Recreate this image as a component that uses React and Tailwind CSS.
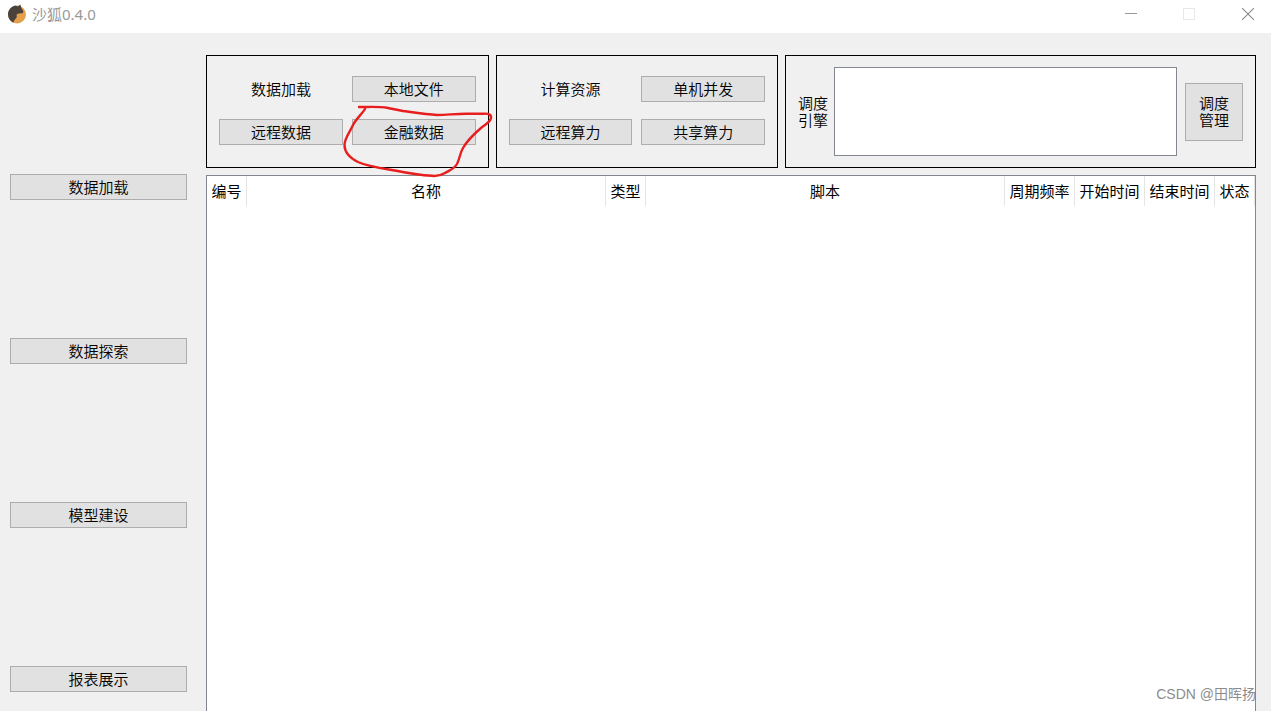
import React from "react";

const STAGES = ["数据加载", "数据探索", "模型建设", "报表展示"];

const COLUMNS = [
  { name: "编号", width: "w-10" },
  { name: "名称", width: "" },
  { name: "类型", width: "w-10" },
  { name: "脚本", width: "" },
  { name: "周期频率", width: "w-[70px]" },
  { name: "开始时间", width: "w-[70px]" },
  { name: "结束时间", width: "w-[70px]" },
  { name: "状态", width: "w-10" },
];

function PushButton({ children, className = "h-[26px]" }) {
  return (
    <button
      type="button"
      className={`border border-[#adadad] bg-[#e1e1e1] text-center font-[350] leading-[17px] hover:border-[#0078d7] hover:bg-[#e5f1fb] ${className}`}
    >
      {children}
    </button>
  );
}

function FoxLogo() {
  return (
    <svg className="size-5" viewBox="0 0 20 20" aria-hidden="true">
      <circle cx="10" cy="10.5" r="9" fill="#e5a04b" />
      <path
        d="M13.2 0.600 L14.300 3.600 C14.800 5.200 16.200 6.400 16.400 8 L15.400 9.200 L11.600 9.400 C9.800 9.800 9.200 10.800 9.800 12.200 C10.200 14 7.400 14.600 6.400 18.800 C3 17.200 1 14 1 10.500 C1 6 4.400 2.200 8.600 1.500 L10.800 2.400 Z"
        fill="#4a433b"
      />
    </svg>
  );
}

function TitleBar() {
  return (
    <header className="flex h-[33px] items-start justify-between bg-white text-[#999999]">
      <div className="flex h-7 items-center gap-[5px] pl-[7px]">
        <FoxLogo />
        <h1 className="text-[15px] leading-5">沙狐0.4.0</h1>
      </div>
      <div className="flex h-7">
        <button type="button" aria-label="最小化" className="flex w-[58px] items-center justify-center">
          <svg className="size-3" viewBox="0 0 12 12">
            <path d="M0 5.5H12" stroke="#999999" />
          </svg>
        </button>
        <button type="button" aria-label="最大化" disabled className="flex w-[58px] items-center justify-center">
          <svg className="size-3" viewBox="0 0 12 12">
            <rect x="0.5" y="0.5" width="11" height="11" fill="none" stroke="#e8e8e8" />
          </svg>
        </button>
        <button type="button" aria-label="关闭" className="flex w-[53px] items-center justify-end pr-[17px]">
          <svg className="size-3" viewBox="0 0 12 12">
            <path d="M0 0L12 12M12 0L0 12" stroke="#8a8a8a" strokeWidth="1.1" />
          </svg>
        </button>
      </div>
    </header>
  );
}

function HandCircle() {
  return (
    <svg
      className="pointer-events-none absolute left-[133px] top-11 z-10 h-20 w-[156px]"
      viewBox="340 100 156 80"
      fill="none"
      stroke="#e81e1e"
      strokeWidth="2.4"
      strokeLinecap="round"
      strokeLinejoin="round"
      aria-hidden="true"
    >
      <path d="M359 107 C371 107 380 106.500 387 107.700 C393 108.800 397 110 403 111 C414 112.500 427 114.500 437 115 C447 115 456 113.700 467 113.800 L484 113.700 C489 113.400 491.500 115 491 118 C490.500 122 486 124 481 128 C474 134 467 141 463 148 C460 153 460 158 457 164 C454 169 450 170 445 173 C441 175.500 438 176.500 432 175.800 C420 175.200 407 173 395 170.500 C383 168.500 368 166.500 358 162 C350 158 344.500 152 344.500 145 C344.500 138 350 132 353 125 C356 119 362 114 365 109" />
    </svg>
  );
}

function ButtonPanel({ title, actions, children }) {
  return (
    <section className="relative grid grid-cols-2 gap-x-[9px] gap-y-[17px] border border-black px-3 pb-[22px] pt-5">
      <h2 className="text-center font-[350] leading-[26px]">{title}</h2>
      {actions.map((action) => (
        <PushButton key={action}>{action}</PushButton>
      ))}
      {children}
    </section>
  );
}

function EnginePanel() {
  return (
    <section className="flex items-center border border-black px-3 py-[11px]">
      <label htmlFor="engine" className="mr-1.5 w-[30px] shrink-0 font-[350] leading-[17px]">
        调度引擎
      </label>
      <textarea
        id="engine"
        className="h-[89px] min-w-0 flex-1 resize-none border border-[#828790] bg-white p-1 outline-none"
      />
      <PushButton className="ml-2 size-[58px] shrink-0 px-3">调度管理</PushButton>
    </section>
  );
}

function TaskTable() {
  return (
    <div className="flex-1 border border-b-0 border-[#828790] bg-white">
      <table className="w-full table-fixed border-separate border-spacing-0">
        <thead>
          <tr>
            {COLUMNS.map((column) => (
              <th
                key={column.name}
                scope="col"
                className={`h-[30px] whitespace-nowrap border-r border-[#e5e5e5] p-0 text-center font-normal ${column.width}`}
              >
                {column.name}
              </th>
            ))}
          </tr>
        </thead>
        <tbody />
      </table>
    </div>
  );
}

export default function App() {
  return (
    <div className="relative flex min-h-screen flex-col bg-[#f0f0f0] font-['Noto_Sans','Noto_Sans_CJK_SC',sans-serif] text-[15px] text-black">
      <TitleBar />
      <div className="flex flex-1">
        <nav className="flex w-[206px] shrink-0 flex-col justify-between gap-4 pb-[19px] pl-2.5 pr-[19px] pt-[141px]">
          {STAGES.map((stage) => (
            <PushButton key={stage}>{stage}</PushButton>
          ))}
        </nav>
        <main className="flex min-w-0 flex-1 flex-col gap-[7px] pr-[15px] pt-[22px]">
          <div className="grid grid-cols-[3fr_3fr_5fr] gap-[7px]">
            <ButtonPanel title="数据加载" actions={["本地文件", "远程数据", "金融数据"]}>
              <HandCircle />
            </ButtonPanel>
            <ButtonPanel title="计算资源" actions={["单机并发", "远程算力", "共享算力"]} />
            <EnginePanel />
          </div>
          <TaskTable />
        </main>
      </div>
      <p className="pointer-events-none absolute bottom-[7px] right-[15px] font-['Liberation_Sans','Noto_Sans_CJK_SC',sans-serif] text-[14px] leading-5 text-[#8c8c8c]">
        CSDN @田晖扬
      </p>
    </div>
  );
}
